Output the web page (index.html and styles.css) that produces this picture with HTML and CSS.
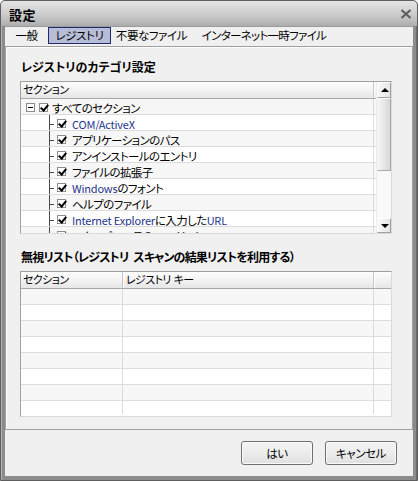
FILE: index.html
```html
<!DOCTYPE html>
<html lang="ja">
<head>
<meta charset="utf-8">
<title>設定</title>
<link rel="stylesheet" href="styles.css">
</head>
<body>
<div class="window">
  <div class="titlebar">
    <span class="title">設定</span>
    <svg class="close" width="12" height="10" viewBox="0 0 12 10"><path d="M1.5 1 L10.5 9 M10.5 1 L1.5 9" stroke="#5c5c5c" stroke-width="2.2" fill="none"/></svg>
  </div>
  <div class="content">
    <div class="tabs">
      <span class="tab">一般</span>
      <span class="tab active">レジストリ</span>
      <span class="tab">不要なファイル</span>
      <span class="tab">インターネット一時ファイル</span>
    </div>
    <div class="panel">
      <div class="group-label">レジストリのカテゴリ設定</div>
      <div class="listbox tree-box">
        <div class="list-main">
          <div class="list-header">
            <span class="hcell col-wide">セクション</span>
            <span class="hcell col-rest"></span>
          </div>
          <div class="rows">
            <div class="row odd"><span class="cell col-wide root"><span class="expander"></span><span class="chk"></span><span class="label">すべてのセクション</span></span><span class="cell col-rest"></span></div>
            <div class="row"><span class="cell col-wide child"><span class="chk"></span><span class="label"><span class="latin">COM/ActiveX</span></span></span><span class="cell col-rest"></span></div>
            <div class="row odd"><span class="cell col-wide child"><span class="chk"></span><span class="label">アプリケーションのパス</span></span><span class="cell col-rest"></span></div>
            <div class="row"><span class="cell col-wide child"><span class="chk"></span><span class="label">アンインストールのエントリ</span></span><span class="cell col-rest"></span></div>
            <div class="row odd"><span class="cell col-wide child"><span class="chk"></span><span class="label">ファイルの拡張子</span></span><span class="cell col-rest"></span></div>
            <div class="row"><span class="cell col-wide child"><span class="chk"></span><span class="label"><span class="latin">Windows</span>のフォント</span></span><span class="cell col-rest"></span></div>
            <div class="row odd"><span class="cell col-wide child"><span class="chk"></span><span class="label">ヘルプのファイル</span></span><span class="cell col-rest"></span></div>
            <div class="row"><span class="cell col-wide child"><span class="chk"></span><span class="label"><span class="latin">Internet Explorer</span>に入力した<span class="latin">URL</span></span></span><span class="cell col-rest"></span></div>
            <div class="row odd"><span class="cell col-wide child"><span class="chk"></span><span class="label">エクスプローラの<span class="latin">MRU</span>リスト</span></span><span class="cell col-rest"></span></div>
          </div>
        </div>
        <div class="vscroll">
          <span class="sbtn up"></span>
          <span class="thumb"></span>
          <span class="track"></span>
          <span class="sbtn down"></span>
        </div>
      </div>
      <div class="group-label second">無視リスト（レジストリ スキャンの結果リストを利用する）</div>
      <div class="listbox grid-box">
        <div class="list-header">
          <span class="hcell c1">セクション</span>
          <span class="hcell c2">レジストリ キー</span>
          <span class="hcell c3"></span>
        </div>
        <div class="rows grid-rows">
          <div class="row odd"><span class="cell c1"></span><span class="cell c2"></span><span class="cell c3"></span></div>
          <div class="row"><span class="cell c1"></span><span class="cell c2"></span><span class="cell c3"></span></div>
          <div class="row odd"><span class="cell c1"></span><span class="cell c2"></span><span class="cell c3"></span></div>
          <div class="row"><span class="cell c1"></span><span class="cell c2"></span><span class="cell c3"></span></div>
          <div class="row odd"><span class="cell c1"></span><span class="cell c2"></span><span class="cell c3"></span></div>
          <div class="row"><span class="cell c1"></span><span class="cell c2"></span><span class="cell c3"></span></div>
          <div class="row odd"><span class="cell c1"></span><span class="cell c2"></span><span class="cell c3"></span></div>
          <div class="row"><span class="cell c1"></span><span class="cell c2"></span><span class="cell c3"></span></div>
        </div>
      </div>
    </div>
    <div class="footer">
      <button class="btn">はい</button>
      <button class="btn">キャンセル</button>
    </div>
  </div>
</div>
</body>
</html>
```

FILE: styles.css
```css
* { box-sizing: border-box; }
html, body { margin: 0; padding: 0; background: #ffffff; }
body {
  font-family: "Noto Sans CJK JP", "Noto Sans", sans-serif;
  font-size: 11px;
  letter-spacing: -0.4px;
  color: #000;
  font-feature-settings: "palt";
}

.window {
  width: 418px;
  height: 481px;
  display: flex;
  flex-direction: column;
  border: 1px solid #5e5e5e;
  border-radius: 5px 5px 0 0;
  padding: 0 4px 4px 4px;
  background: #8c8c8c;
  box-shadow: inset 1px 0 0 #b4b4b4, inset -1px 0 0 #6c6c6c;
  overflow: hidden;
}

.titlebar {
  height: 25px;
  margin: 0 -4px;
  padding: 2px 5px 0 8px;
  display: flex;
  align-items: center;
  justify-content: space-between;
  background: linear-gradient(#e4e4e4, #d0d0d0 45%, #bcbcbc 80%, #acacac);
  border-radius: 4px 4px 0 0;
}
.title {
  font-weight: bold;
  font-size: 13px;
  line-height: 16px;
  letter-spacing: 0.5px;
}
.close { display: block; margin-top: -2px; }

.content {
  flex: 1;
  display: flex;
  flex-direction: column;
  background: #f0f0f0;
  border-top: 1px solid #9a9a9a;
}

.tabs {
  height: 19px;
  display: grid;
  grid-template-columns: 43px 63px 81px 144px;
  align-items: start;
}
.tab {
  height: 17px;
  line-height: 15px;
  font-size: 11.5px;
  text-align: center;
  border: 1px solid transparent;
  white-space: nowrap;
}
.tab:last-child { letter-spacing: -0.7px; }
.tab.active {
  background: #b7bdd7;
  border-color: #1d2a6c;
}

.panel {
  height: 384px;
  border: 1px solid #a0a0a0;
  box-shadow: inset 1px 1px 0 #ffffff;
  padding: 0 0 0 14px;
  display: flex;
  flex-direction: column;
}

.group-label {
  font-weight: bold;
  font-size: 12px;
  letter-spacing: 0;
  line-height: 16px;
  margin-top: 12px;
  margin-bottom: 6px;
  padding-left: 1px;
  white-space: nowrap;
}
.group-label.second { margin-top: 15px; letter-spacing: -0.8px; word-spacing: 3px; }

.listbox {
  width: 372px;
  border: 1px solid;
  border-color: #a0a0a0 #dadada #dadada #a0a0a0;
  background: #ffffff;
  overflow: hidden;
}
.tree-box {
  height: 153px;
  display: grid;
  grid-template-columns: 355px 15px;
}
.grid-box { height: 146px; }

.list-header {
  height: 17px;
  display: flex;
  background: linear-gradient(#fdfdfd, #f3f3f3 50%, #e6e6e6);
  border-bottom: 1px solid #a8a8a8;
}
.hcell {
  height: 16px;
  line-height: 15px;
  padding-left: 2px;
  white-space: nowrap;
  border-right: 1px solid #c6c6c6;
  box-shadow: 1px 0 0 #ffffff;
  letter-spacing: -0.6px;
  word-spacing: 1px;
}
.col-wide { width: 353px; flex: none; }
.col-rest { flex: 1; border-right: none; box-shadow: none; }

.rows { overflow: hidden; }
.list-main { overflow: hidden; }
.list-main .rows { height: 135px; }

.row {
  height: 16px;
  display: flex;
  border-bottom: 1px solid #dcdcdc;
  background: #ffffff;
}
.row.odd { background: #f7f7f7; }
.cell {
  height: 15px;
  border-right: 1px solid #dcdcdc;
  display: flex;
  align-items: center;
  white-space: nowrap;
  overflow: hidden;
}
.cell.col-rest { border-right: none; }

.root { padding-left: 5px; padding-top: 2px; }
.child { padding-left: 36px; padding-top: 2px; position: relative; }
.child::before {
  content: "";
  position: absolute;
  left: 28px;
  top: 0;
  bottom: -1px;
  border-left: 1px solid #4a4a4a;
}
.child::after {
  content: "";
  position: absolute;
  left: 29px;
  top: 9px;
  width: 4px;
  border-top: 1px solid #4a4a4a;
}

.expander {
  width: 9px;
  height: 9px;
  border: 1px solid #8a8a8a;
  background: #fff;
  position: relative;
  margin-right: 4px;
  flex: none;
}
.expander::after {
  content: "";
  position: absolute;
  left: 1px;
  top: 3px;
  width: 5px;
  border-top: 1px solid #000;
}

.chk {
  width: 9px;
  height: 9px;
  border: 1px solid #8e8e8e;
  background: #fff;
  position: relative;
  flex: none;
}
.chk::after {
  content: "";
  position: absolute;
  left: 2px;
  top: -1px;
  width: 3px;
  height: 6px;
  border-right: 2px solid #000;
  border-bottom: 2px solid #000;
  transform: rotate(40deg);
}
.root .chk { margin-right: 4px; }
.child .chk { margin-right: 6px; }

.label { line-height: 14px; font-size: 11.5px; letter-spacing: -0.6px; }
.latin { color: #24338c; font-size: 11px; letter-spacing: -0.2px; }

.vscroll {
  display: flex;
  flex-direction: column;
  background: #f6f6f6;
  border-left: 1px solid #ececec;
}
.sbtn {
  height: 16px;
  flex: none;
  background: linear-gradient(90deg, #f8f8f8, #e6e6e6);
  border: 1px solid;
  border-color: #ffffff #a0a0a0 #a0a0a0 #ffffff;
  position: relative;
}
.sbtn::after {
  content: "";
  position: absolute;
  left: 3px;
  top: 5px;
  border-left: 4px solid transparent;
  border-right: 4px solid transparent;
}
.sbtn.up::after { border-bottom: 4px solid #000; }
.sbtn.down { height: 15px; }
.sbtn.down::after { border-top: 4px solid #000; top: 5px; }
.thumb {
  height: 73px;
  flex: none;
  background: linear-gradient(90deg, #f6f6f6, #e4e4e4 60%, #d6d6d6);
  border: 1px solid;
  border-color: #ffffff #a8a8a8 #a8a8a8 #f4f4f4;
}
.track { flex: 1; background: #f9f9f9; }

.c1 { width: 102px; flex: none; }
.c2 { width: 251px; flex: none; padding-left: 3px; }
.c3 { flex: 1; border-right: none; box-shadow: none; }
.grid-rows { height: 125px; }
.grid-rows .cell.c3 { border-right: none; }

.footer {
  flex: 1;
  display: flex;
  justify-content: flex-end;
  align-items: flex-start;
  gap: 12px;
  padding: 11px 16px 0 0;
}
.btn {
  width: 72px;
  height: 24px;
  font-family: inherit;
  font-size: 11.5px;
  letter-spacing: -0.4px;
  font-feature-settings: "palt";
  color: #000;
  border: 1px solid #707070;
  border-radius: 3px;
  background: linear-gradient(#f4f4f4, #ececec 50%, #e0e0e0);
  box-shadow: inset 0 0 0 1px #fbfbfb;
  padding: 0;
  line-height: 20px;
}
```
